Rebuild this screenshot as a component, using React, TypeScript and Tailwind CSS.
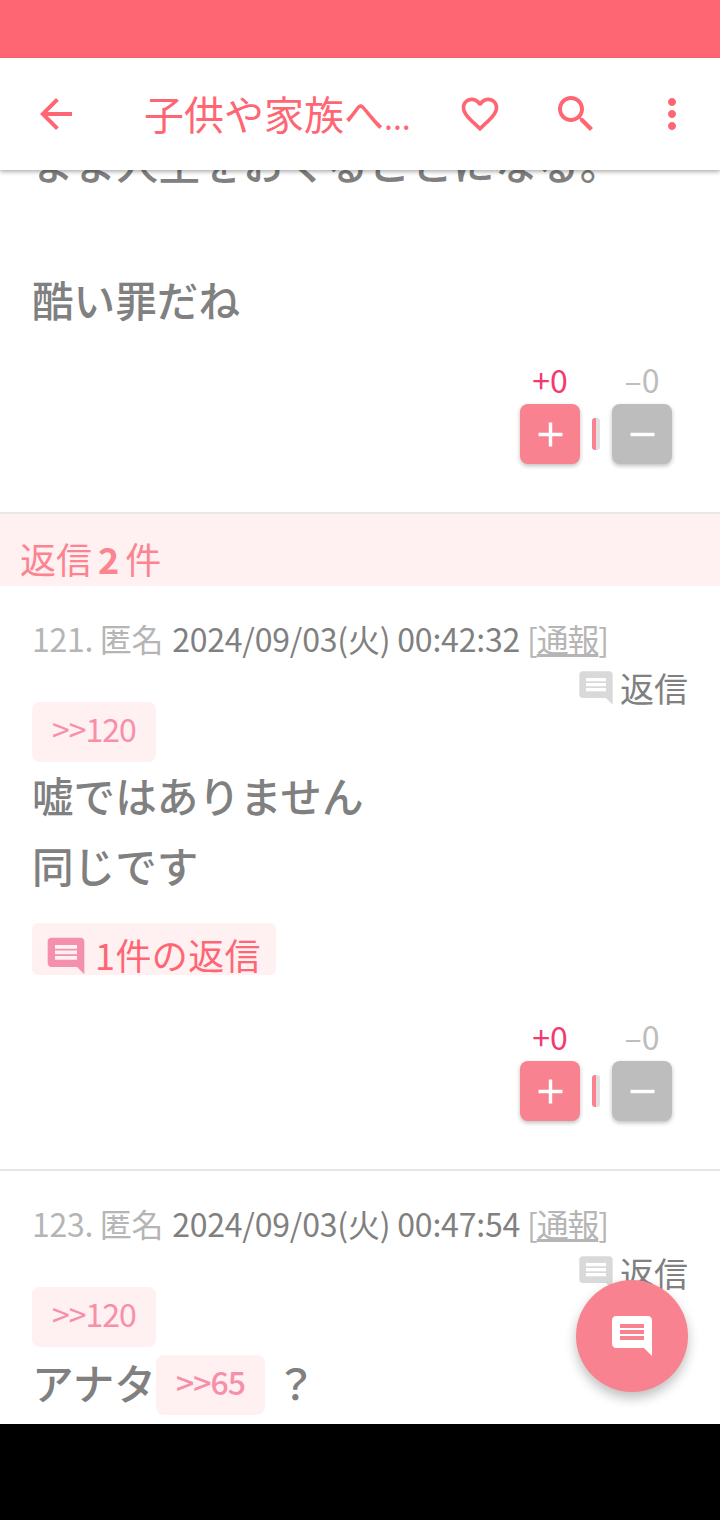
import React from "react";

const FONT = "font-['Noto_Sans_CJK_JP','Noto_Sans',sans-serif]";
const COMMENT =
  "M21.99 4c0-1.1-.89-2-1.99-2H4c-1.1 0-2 .9-2 2v12c0 1.1.9 2 2 2h14l4 4-.01-18zM18 14H6v-2h12v2zm0-3H6V9h12v2zm0-3H6V6h12v2z";

const Icon = ({ d, className }: { d: string; className: string }) => (
  <svg viewBox="0 0 24 24" className={className} fill="currentColor">
    <path d={d} />
  </svg>
);

const Votes = () => (
  <div className="flex justify-end pr-12">
    <div className="flex flex-col">
      <div className="flex h-[46px] items-start text-[32px] leading-[42px]">
        <span className="w-[60px] text-center text-[#f4396f]">+0</span>
        <span className="ml-8 w-[60px] text-center text-[#bdbdbd]">–0</span>
      </div>
      <div className="flex items-center">
        <div className="flex h-[60px] w-[60px] items-center justify-center rounded-lg bg-[#f8828f] shadow-[0_2px_4px_rgba(0,0,0,0.25)]">
          <Icon d="M19 13h-6v6h-2v-6H5v-2h6V5h2v6h6v2z" className="h-[41px] w-[41px] text-white" />
        </div>
        <div className="mx-3 flex h-8 w-2 overflow-hidden rounded-[3px]">
          <div className="w-1/2 bg-[#f8828f]" />
          <div className="w-1/2 bg-[#e0e0e0]" />
        </div>
        <div className="flex h-[60px] w-[60px] items-center justify-center rounded-lg bg-[#bdbdbd] shadow-[0_2px_4px_rgba(0,0,0,0.25)]">
          <Icon d="M19 13H5v-2h14v2z" className="h-[41px] w-[41px] text-white" />
        </div>
      </div>
    </div>
  </div>
);

const Anchor = ({ label }: { label: string }) => (
  <span className="flex h-[60px] items-center rounded-lg bg-[#fff0f1] px-5 pb-2 text-[32px] leading-none tracking-[-1px] text-[#f78fa9]">
    {label}
  </span>
);

const Meta = ({ no, time }: { no: string; time: string }) => (
  <>
    <div className="flex h-[51px] items-center whitespace-nowrap text-[32px] leading-[50px] tracking-[-0.3px] text-[#b5b5b5]">
      <span>{no}. 匿名&nbsp;</span>
      <span className="ml-[2px] tracking-[-0.2px] text-[#808080]">{time}</span>
      <span className="ml-[7px] tracking-[-1.2px]">
        [<span className="underline">通報</span>]
      </span>
    </div>
    <div className="flex h-[50px] items-center justify-end gap-1 text-[34px] leading-none text-[#808080]">
      <Icon d={COMMENT} className="h-10 w-10 text-[#d9d9d9]" />
      <span>返信</span>
    </div>
  </>
);

export default function App() {
  return (
    <div className={`flex h-[1520px] w-[720px] flex-col bg-black ${FONT}`}>
      <div className="relative flex h-[1424px] flex-col overflow-hidden bg-white">
        <div className="h-[58px] shrink-0 bg-[#ff6673]" />
        <header className="relative z-10 flex h-[112px] shrink-0 items-center bg-white text-[#ff6673] shadow-[0_2px_4px_rgba(0,0,0,0.3)]">
          <div className="flex w-[112px] items-center justify-center">
            <Icon d="M20 11H7.83l5.59-5.59L12 4l-8 8 8 8 1.41-1.41L7.83 13H20v-2z" className="h-12 w-12" />
          </div>
          <div className="ml-8 w-[288px] whitespace-nowrap pb-[3px] text-[40px] leading-none">
            子供や家族へ<span className="text-[32px]">...</span>
          </div>
          <div className="flex w-24 justify-center">
            <Icon
              d="M16.5 3c-1.74 0-3.41.81-4.5 2.09C10.91 3.81 9.24 3 7.5 3 4.42 3 2 5.42 2 8.5c0 3.78 3.4 6.86 8.55 11.54L12 21.35l1.45-1.32C18.6 15.36 22 12.28 22 8.5 22 5.42 19.58 3 16.5 3zm-4.4 15.55l-.1.1-.1-.1C7.14 14.24 4 11.39 4 8.5 4 6.5 5.5 5 7.5 5c1.54 0 3.04.99 3.57 2.36h1.87C13.46 5.99 14.96 5 16.5 5c2 0 3.5 1.5 3.5 3.5 0 2.89-3.14 5.74-7.9 10.05z"
              className="h-11 w-11"
            />
          </div>
          <div className="flex w-24 justify-center">
            <Icon
              d="M15.5 14h-.79l-.28-.27C15.41 12.59 16 11.11 16 9.5 16 5.91 13.09 3 9.5 3S3 5.91 3 9.5 5.91 16 9.5 16c1.61 0 3.09-.59 4.23-1.57l.27.28v.79l5 4.99L20.49 19l-4.99-5zm-6 0C7.01 14 5 11.99 5 9.5S7.01 5 9.5 5 14 7.01 14 9.5 11.99 14 9.5 14z"
              className="h-12 w-12"
            />
          </div>
          <div className="flex w-24 justify-center">
            <Icon
              d="M12 8c1.1 0 2-.9 2-2s-.9-2-2-2-2 .9-2 2 .9 2 2 2zm0 2c-1.1 0-2 .9-2 2s.9 2 2 2 2-.9 2-2-.9-2-2-2zm0 6c-1.1 0-2 .9-2 2s.9 2 2 2 2-.9 2-2-.9-2-2-2z"
              className="h-12 w-12"
            />
          </div>
        </header>

        <main className="flex-1 overflow-hidden">
          {/* tail of the previous post, scrolled under the toolbar */}
          <section className="-mt-[43px] border-b-2 border-[#e8e8e8] pb-12">
            <div className="px-8 text-[41.6px] font-medium leading-[70px] text-[#808080]">
              <p className="whitespace-nowrap tracking-[0.6px]">まま人生をおくることになる。</p>
              <p className="h-[67px]" />
              <p>酷い罪だね</p>
            </div>
            <div className="mt-6">
              <Votes />
            </div>
          </section>

          <div className="flex h-[72px] items-end overflow-hidden bg-[#fff0f1] pl-5 pb-[2px] text-[36px] leading-[52px] text-[#fb8490]">
            返信<span className="mx-[6px] font-bold">2</span>件
          </div>

          <article className="border-b-2 border-[#e5e5e5] pb-12">
            <div className="px-8 pt-[26px]">
              <Meta no="121" time="2024/09/03(火) 00:42:32" />
              <div className="-mt-[11px] flex">
                <Anchor label=">>120" />
              </div>
              <div className="-mt-[2px] text-[41.6px] font-medium leading-[70px] text-[#808080]">
                <p>嘘ではありません</p>
                <p>同じです</p>
              </div>
              <div className="mt-[23px] flex h-[52px] w-[244px] items-center gap-[7px] overflow-hidden rounded-md bg-[#fff0f1] pl-3 pt-[10px] text-[36px] leading-none text-[#ff6673]">
                <Icon d={COMMENT} className="mt-1 h-11 w-11 shrink-0 text-[#f48fae]" />
                <span className="whitespace-nowrap tracking-[0.4px]">1件の返信</span>
              </div>
            </div>
            <div className="mt-[40px]">
              <Votes />
            </div>
          </article>

          <article className="px-8 pt-[26px]">
            <Meta no="123" time="2024/09/03(火) 00:47:54" />
            <div className="-mt-[11px] flex">
              <Anchor label=">>120" />
            </div>
            <div className="mt-2 flex items-start text-[41.6px] font-medium leading-[54px] text-[#808080]">
              <span>アナタ</span>
              <Anchor label=">>65" />
              <span className="ml-[10px]">？</span>
            </div>
          </article>
        </main>

        <button className="absolute left-[576px] top-[1280px] flex h-[112px] w-[112px] items-center justify-center rounded-full bg-[#f8828f] shadow-[0_6px_12px_rgba(0,0,0,0.25)]">
          <Icon d={COMMENT} className="h-12 w-12 text-white" />
        </button>
      </div>
    </div>
  );
}
